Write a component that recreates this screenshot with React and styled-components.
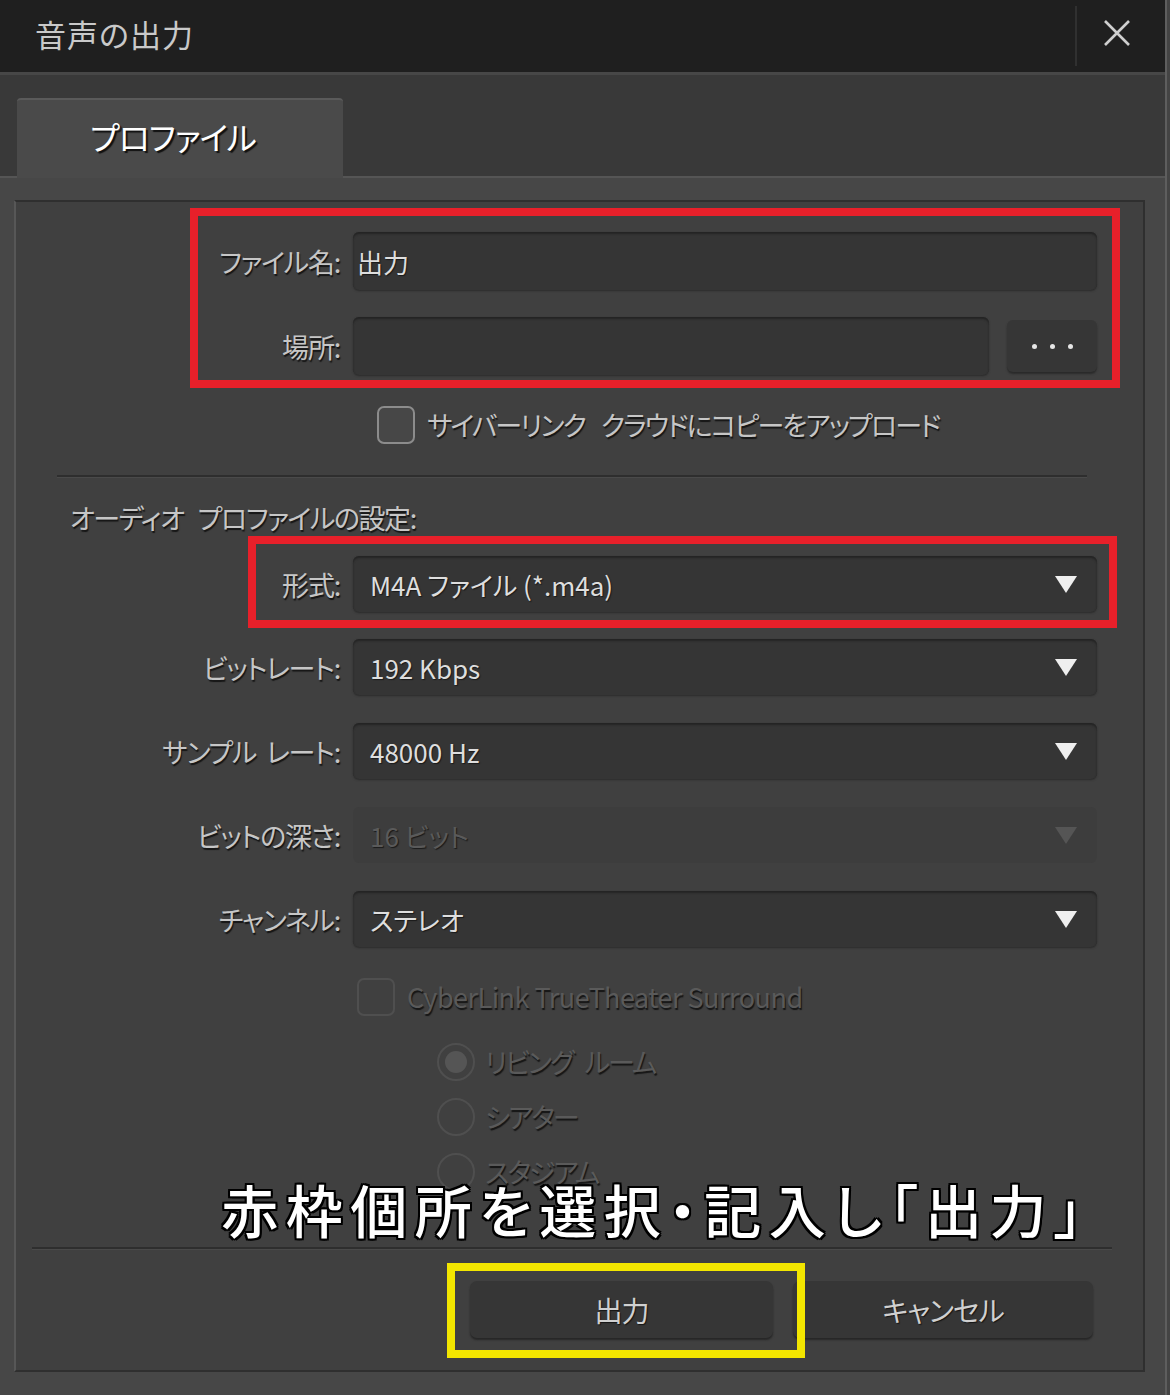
import styled, { createGlobalStyle } from "styled-components";

const GlobalStyle = createGlobalStyle`
  html, body {
    margin: 0;
    padding: 0;
    background: #444444;
  }
  body {
    font-family: "Noto Sans CJK JP", "Noto Sans", "Liberation Sans", sans-serif;
    font-feature-settings: "palt";
  }
`;

const Window = styled.div`
  width: 1165px;
  height: 1395px;
  background: #474747;
  border-right: 2px solid #5e5e5e;
  overflow: hidden;
`;

const TitleBar = styled.div`
  height: 72px;
  background: #1f1f1f;
  border-bottom: 3px solid #474747;
  display: flex;
  align-items: center;
`;

const Title = styled.div`
  flex: 1;
  padding-left: 35px;
  padding-bottom: 6px;
  font-size: 31px;
  color: #c9c9c9;
  letter-spacing: 1px;
`;

const CloseButton = styled.div`
  width: 80px;
  height: 54px;
  margin-right: 8px;
  border-left: 2px solid #303030;
  display: flex;
  align-items: center;
  justify-content: center;
  padding-bottom: 6px;
`;

const TabBar = styled.div`
  height: 101px;
  background: #393939;
  border-bottom: 2px solid #555555;
  display: flex;
  align-items: flex-end;
  padding-left: 17px;
`;

const Tab = styled.div`
  width: 326px;
  height: 80px;
  margin-bottom: -2px;
  background: #4a4a4a;
  border-top: 2px solid #5a5a5a;
  border-radius: 4px 4px 0 0;
  display: flex;
  align-items: center;
  justify-content: center;
  font-size: 32px;
  letter-spacing: -1px;
  color: #ffffff;
  text-shadow: 2px 2px 1px #111;
  padding: 0 14px 6px 0;
  box-sizing: border-box;
`;

const Body = styled.div`
  padding: 22px 0 0 14px;
`;

const Panel = styled.div`
  width: 1131px;
  box-sizing: border-box;
  background: #404040;
  border: 2px solid #2f2f2f;
  border-left-color: #575757;
  padding: 30px 46px 32px 40px;
  display: flex;
  flex-direction: column;
`;

const Group = styled.div`
  position: relative;
  display: flex;
  flex-direction: column;
  gap: ${(p) => p.$gap || 27}px;
  margin-top: ${(p) => p.$top || 0}px;
`;

const Frame = styled.div`
  position: absolute;
  top: ${(p) => p.$t}px;
  left: ${(p) => p.$l}px;
  right: ${(p) => p.$r}px;
  bottom: ${(p) => p.$b}px;
  border: 8px solid ${(p) => p.$color};
  pointer-events: none;
`;

const Row = styled.div`
  display: grid;
  grid-template-columns: 1fr 744px;
  column-gap: 13px;
  align-items: center;
`;

const Label = styled.div`
  text-align: right;
  font-size: 27px;
  letter-spacing: -1.2px;
  color: #c6c6c6;
  text-shadow: 1px 2px 1px #151515;
  white-space: nowrap;
`;

const Gap = styled.span`
  display: inline-block;
  width: ${(p) => p.$w}px;
`;

const Field = styled.div`
  height: ${(p) => p.$h || 56}px;
  box-sizing: border-box;
  background: ${(p) => (p.$disabled ? "#3d3d3d" : "#353535")};
  border-radius: 6px;
  box-shadow: ${(p) =>
    p.$disabled ? "none" : "inset 0 2px 2px #242424, 0 1px 2px #2a2a2a"};
  display: flex;
  align-items: center;
  padding: 0 20px 0 ${(p) => p.$pad || 17}px;
  font-size: 26px;
  color: ${(p) => (p.$disabled ? "#5a5a5a" : "#dedede")};
  flex: 1;
`;

const FieldText = styled.span`
  flex: 1;
  text-shadow: 1px 1px 1px #1a1a1a;
`;

const Arrow = styled.span`
  width: 0;
  height: 0;
  border-left: 11px solid transparent;
  border-right: 11px solid transparent;
  border-top: 17px solid ${(p) => (p.$disabled ? "#555" : "#efefef")};
`;

const Inline = styled.div`
  display: flex;
  align-items: center;
  gap: 18px;
`;

const DotsButton = styled.div`
  width: 90px;
  height: 52px;
  background: #363636;
  border-radius: 6px;
  box-shadow: 0 2px 2px #2a2a2a;
  display: flex;
  align-items: center;
  justify-content: center;
  gap: 13px;
`;

const Dot = styled.span`
  width: 5px;
  height: 5px;
  border-radius: 50%;
  background: #e6e6e6;
`;

const CheckRow = styled.label`
  display: flex;
  align-items: center;
  gap: ${(p) => p.$gap || 12}px;
  margin-top: ${(p) => p.$top}px;
  padding-left: ${(p) => p.$indent}px;
  font-size: 27px;
  letter-spacing: ${(p) => (p.$latin ? "-0.5px" : "-1.9px")};
  color: ${(p) => (p.$disabled ? "#5a5a5a" : "#c6c6c6")};
  text-shadow: 1px 2px 1px #151515;
  white-space: nowrap;
`;

const Box = styled.span`
  width: 38px;
  height: 38px;
  box-sizing: border-box;
  border-radius: 7px;
  border: 2px solid ${(p) => (p.$disabled ? "#4f4f4f" : "#8c8c8c")};
  background: ${(p) => (p.$disabled ? "#404040" : "#474747")};
  flex-shrink: 0;
`;

const Radio = styled.span`
  width: 38px;
  height: 38px;
  box-sizing: border-box;
  border-radius: 50%;
  border: 2px solid #4f4f4f;
  display: flex;
  align-items: center;
  justify-content: center;
  flex-shrink: 0;
  &::after {
    content: "";
    width: 22px;
    height: 22px;
    border-radius: 50%;
    background: ${(p) => (p.$checked ? "#555555" : "transparent")};
  }
`;

const RadioList = styled.div`
  display: flex;
  flex-direction: column;
  gap: 16px;
  margin-top: 26px;
`;

const Divider = styled.div`
  height: 0;
  border-top: 2px solid #2e2e2e;
  border-bottom: 1px solid #4a4a4a;
  margin: ${(p) => p.$m};
`;

const Heading = styled.div`
  margin-top: 24px;
  padding-left: 14px;
  line-height: 32px;
  font-size: 27px;
  letter-spacing: -1.4px;
  color: #c6c6c6;
  text-shadow: 1px 2px 1px #151515;
`;

const Footer = styled.div`
  position: relative;
  margin: 56px -15px 0 -24px;
`;

const Caption = styled.div`
  position: absolute;
  right: 22px;
  bottom: calc(100% + 4px);
  font-size: 57px;
  font-weight: 500;
  letter-spacing: 7.5px;
  line-height: 70px;
  color: #ffffff;
  white-space: nowrap;
  text-shadow: -2px -2px 0 #000, 2px -2px 0 #000, -2px 2px 0 #000,
    2px 2px 0 #000, 0 2px 0 #000, 0 -2px 0 #000, 2px 0 0 #000, -2px 0 0 #000;
`;

const Buttons = styled.div`
  display: flex;
  justify-content: flex-end;
  gap: 20px;
  margin-top: 31px;
  padding-right: 19px;
`;

const ButtonWrap = styled.div`
  position: relative;
  display: flex;
`;

const Button = styled.div`
  width: ${(p) => p.$w}px;
  height: 57px;
  box-sizing: border-box;
  background: #363636;
  border-radius: 7px;
  box-shadow: 0 2px 2px #262626;
  display: flex;
  align-items: center;
  justify-content: center;
  font-size: 28px;
  letter-spacing: -1px;
  color: #d0d0d0;
  text-shadow: 1px 1px 1px #151515;
`;

const SelectRow = ({ label, value, disabled }) => (
  <Row>
    <Label>{label}</Label>
    <Field $disabled={disabled}>
      <FieldText>{value}</FieldText>
      <Arrow $disabled={disabled} />
    </Field>
  </Row>
);

const App = () => {
  return (
    <>
      <GlobalStyle />
      <Window>
        <TitleBar>
          <Title>音声の出力</Title>
          <CloseButton>
            <svg width="28" height="28" viewBox="0 0 28 28">
              <path d="M2 2 L26 26 M26 2 L2 26" stroke="#cfcfcf" strokeWidth="2.6" />
            </svg>
          </CloseButton>
        </TitleBar>
        <TabBar>
          <Tab>プロファイル</Tab>
        </TabBar>
        <Body>
          <Panel>
            <Group>
              <Row>
                <Label>ファイル名:</Label>
                <Field $h={58} $pad={4}>
                  <FieldText>出力</FieldText>
                </Field>
              </Row>
              <Row>
                <Label>場所:</Label>
                <Inline>
                  <Field $h={58} />
                  <DotsButton>
                    <Dot />
                    <Dot />
                    <Dot />
                  </DotsButton>
                </Inline>
              </Row>
              <Frame $t={-24} $l={134} $r={-23} $b={-13} $color="#e8202a" />
            </Group>

            <CheckRow $top={30} $indent={321}>
              <Box />
              <span>
                サイバーリンク<Gap $w={16} />クラウドにコピーをアップロード
              </span>
            </CheckRow>

            <Divider $m="31px 10px 0 1px" />

            <Heading>
              オーディオ<Gap $w={14} />プロファイルの設定:
            </Heading>

            <Group $top={22} $gap={28}>
              <SelectRow label="形式:" value="M4A ファイル (*.m4a)" />
              <Frame $t={-20} $l={192} $r={-20} $b={-16} $color="#e8202a" />
            </Group>

            <Group $top={27} $gap={28}>
              <SelectRow label="ビットレート:" value="192 Kbps" />
              <SelectRow
                label={
                  <>
                    サンプル<Gap $w={10} />レート:
                  </>
                }
                value="48000 Hz"
              />
              <SelectRow label="ビットの深さ:" value="16 ビット" disabled />
              <SelectRow label="チャンネル:" value="ステレオ" />
            </Group>

            <CheckRow $top={30} $indent={301} $disabled $latin>
              <Box $disabled />
              CyberLink TrueTheater Surround
            </CheckRow>

            <RadioList>
              <CheckRow $top={0} $indent={381} $gap={10} $disabled>
                <Radio $checked />
                <span>
                  リビング<Gap $w={12} />ルーム
                </span>
              </CheckRow>
              <CheckRow $top={0} $indent={381} $gap={10} $disabled>
                <Radio />
                シアター
              </CheckRow>
              <CheckRow $top={0} $indent={381} $gap={10} $disabled>
                <Radio />
                スタジアム
              </CheckRow>
            </RadioList>

            <Footer>
              <Caption>赤枠個所を選択・記入し「出力」</Caption>
              <Divider $m="0" />
              <Buttons>
                <ButtonWrap>
                  <Button $w={303}>出力</Button>
                  <Frame $t={-18} $l={-23} $r={-32} $b={-20} $color="#f3e600" />
                </ButtonWrap>
                <Button $w={300}>キャンセル</Button>
              </Buttons>
            </Footer>
          </Panel>
        </Body>
      </Window>
    </>
  );
};

export default App;
